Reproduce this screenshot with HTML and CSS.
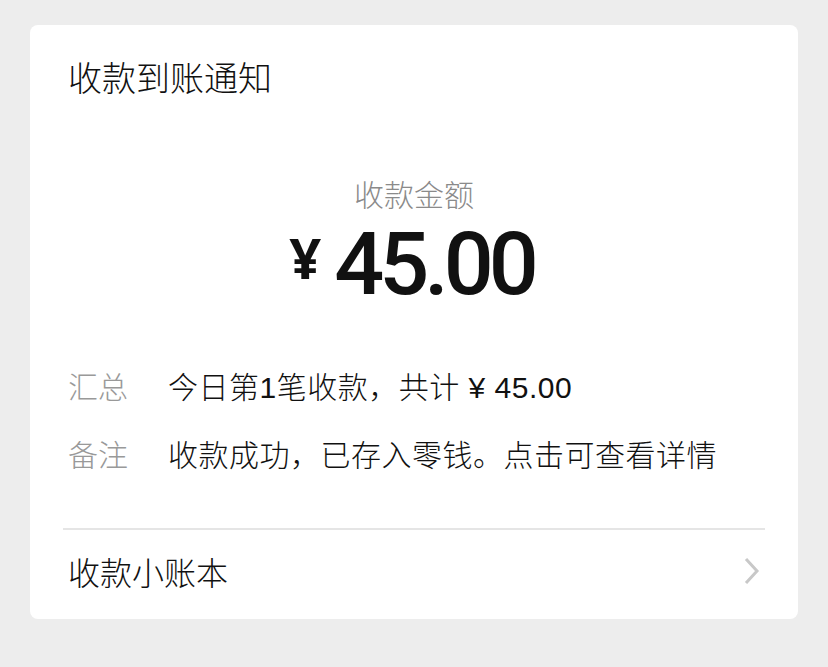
FILE: index.html
```html
<!DOCTYPE html>
<html lang="zh-CN">
<head>
    <meta charset="UTF-8">
    <meta name="viewport" content="width=device-width, initial-scale=1.0">
    <title>收款到账通知</title>
    <link rel="stylesheet" href="styles.css">
</head>
<body>
    <div class="card">
        <h1 class="title">收款到账通知</h1>

        <div class="amount">
            <div class="amount-label">收款金额</div>
            <div class="amount-value"><span class="yen">¥</span><span class="num">45.00</span></div>
        </div>

        <div class="details">
            <div class="row">
                <span class="label">汇总</span>
                <span class="value">今日第1笔收款，共计 ¥ 45.00</span>
            </div>
            <div class="row">
                <span class="label">备注</span>
                <span class="value">收款成功，已存入零钱。点击可查看详情</span>
            </div>
        </div>

        <div class="footer">
            <span>收款小账本</span>
            <svg class="chevron" width="20" height="30" viewBox="0 0 20 30">
                <path d="M4 3 L15 15 L4 27" fill="none" stroke="#c8c8c8" stroke-width="3"/>
            </svg>
        </div>
    </div>
</body>
</html>
```

FILE: styles.css
```css
body {
    margin: 0;
    padding: 25px 30px;
    background: #ededed;
    font-family: "Liberation Sans", "Noto Sans CJK SC", sans-serif;
    color: #111;
}
.card {
    width: 768px;
    background: #fff;
    border-radius: 8px;
    padding-top: 30px;
    box-sizing: border-box;
}
.title {
    margin: 0;
    padding: 0 38px;
    font-size: 34px;
    font-weight: 300;
    line-height: 48px;
}
.amount {
    text-align: center;
    margin-top: 73px;
}
.amount-label {
    font-size: 30px;
    font-weight: 300;
    line-height: 40px;
    color: #8a8a8a;
}
.amount-value {
    display: flex;
    justify-content: center;
    align-items: center;
    height: 92px;
    margin-top: 2px;
}
.yen {
    font-family: "Noto Sans", sans-serif;
    font-size: 56px;
    font-weight: bold;
    line-height: 56px;
    margin-right: 13px;
    margin-bottom: 14px;
}
.num {
    font-family: Roboto, sans-serif;
    font-size: 88px;
    font-weight: 500;
    line-height: 92px;
    letter-spacing: -5px;
    margin-right: 5px;
}
.details {
    margin-top: 57px;
    padding: 0 38px;
    display: flex;
    flex-direction: column;
    gap: 26px;
}
.row {
    display: flex;
    font-size: 30px;
    font-weight: 300;
    line-height: 42px;
}
.label {
    width: 100px;
    color: #999;
}
.value {
    color: #111;
    letter-spacing: 0.5px;
}
.footer {
    margin: 51px 33px 0;
    border-top: 2px solid #e5e5e5;
    display: flex;
    justify-content: space-between;
    align-items: center;
    height: 81px;
    padding: 0 0 8px 5px;
    font-size: 32px;
    font-weight: 300;
}
.chevron {
    margin-right: 3px;
}
```
